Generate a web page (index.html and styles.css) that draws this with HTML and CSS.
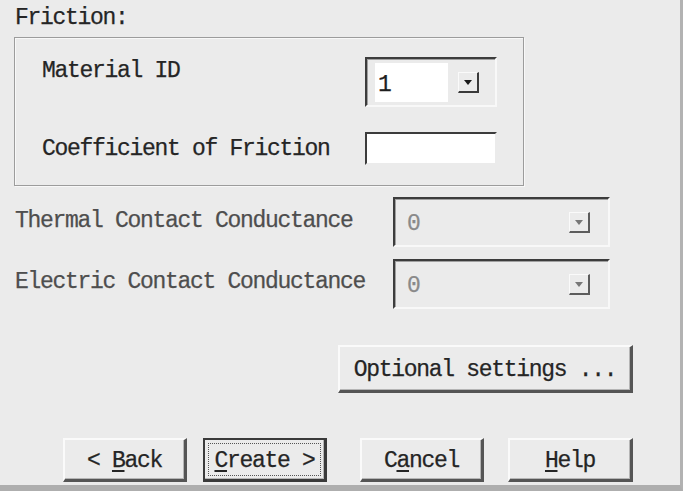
FILE: index.html
```html
<!DOCTYPE html>
<html>
<head>
<meta charset="utf-8">
<link rel="stylesheet" href="styles.css">
</head>
<body>
<div class="dialog">
  <div class="title">Friction:</div>
  <div class="group">
    <div class="label top">Material ID</div>
    <div class="combo">
      <div class="field">1</div>
      <div class="btnarea"><span class="dd"><span class="arrow"></span></span></div>
    </div>
    <div class="label">Coefficient of Friction</div>
    <div class="textbox"></div>
  </div>
  <div class="rows">
    <div class="label dis">Thermal Contact Conductance</div>
    <div class="combo disabled">
      <div class="field">0</div>
      <div class="btnarea"><span class="dd"><span class="arrow"></span></span></div>
    </div>
    <div class="label dis">Electric Contact Conductance</div>
    <div class="combo disabled">
      <div class="field">0</div>
      <div class="btnarea"><span class="dd"><span class="arrow"></span></span></div>
    </div>
  </div>
  <div class="optrow">
    <button class="btn opt"><span>Optional settings ...</span></button>
  </div>
  <div class="buttons">
    <button class="btn"><span>&lt; <u>B</u>ack</span></button>
    <button class="btn default"><span class="focus"><span><u>C</u>reate &gt;</span></span></button>
    <button class="btn cancel"><span>C<u>a</u>ncel</span></button>
    <button class="btn help"><span><u>H</u>elp</span></button>
  </div>
</div>
</body>
</html>
```

FILE: styles.css
```css
html, body {
  margin: 0;
  padding: 0;
  background: #ebebeb;
}
body {
  width: 683px;
  height: 491px;
  overflow: hidden;
  font-family: "Liberation Mono", "DejaVu Sans Mono", monospace;
  font-size: 23px;
  letter-spacing: -1.3px;
  color: #252525;
  -webkit-text-stroke: 0.25px currentColor;
}
.dialog {
  box-sizing: border-box;
  width: 683px;
  height: 491px;
  border-right: 3px solid #b2b2b2;
  border-bottom: 6px solid #aeaeae;
  display: flex;
  flex-direction: column;
}
.title {
  margin: 6px 0 0 15px;
  line-height: 24px;
  height: 24px;
}
.label {
  line-height: 26px;
  white-space: nowrap;
  align-self: center;
}
.label.top {
  align-self: start;
  margin-top: 1px;
}
.label.dis {
  color: #4e4e4e;
}
.group {
  box-sizing: border-box;
  margin: 7px 0 0 14px;
  width: 510px;
  height: 149px;
  border: 1px solid #9c9c9c;
  box-shadow: inset 1px 1px 0 #f8f8f8, 1px 1px 0 #f8f8f8;
  padding: 19px 0 0 27px;
  display: grid;
  grid-template-columns: 323px 132px;
  grid-template-rows: 50px 33px;
  row-gap: 25px;
}
.combo {
  box-sizing: border-box;
  height: 50px;
  border-top: 2px solid #3c3c3c;
  border-left: 2px solid #3c3c3c;
  border-right: 2px solid #f8f8f8;
  border-bottom: 2px solid #f8f8f8;
  box-shadow: inset 1px 1px 0 #a0a0a0;
  padding: 4px 4px 3px 8px;
  display: flex;
}
.field {
  width: 73px;
  background: #ffffff;
  line-height: 44px;
  padding-left: 3px;
  box-sizing: border-box;
  color: #1e1e1e;
}
.btnarea {
  flex: 1;
  display: flex;
  align-items: center;
  justify-content: flex-end;
  padding-right: 12px;
}
.dd {
  box-sizing: border-box;
  width: 21px;
  height: 21px;
  border-top: 1px solid #fafafa;
  border-left: 1px solid #fafafa;
  border-right: 2px solid #3a3a3a;
  border-bottom: 2px solid #3a3a3a;
  display: flex;
  align-items: center;
  justify-content: center;
}
.arrow {
  width: 0;
  height: 0;
  border-left: 4px solid transparent;
  border-right: 4px solid transparent;
  border-top: 5px solid #1a1a1a;
  margin-top: 1px;
}
.textbox {
  box-sizing: border-box;
  height: 33px;
  background: #ffffff;
  border-top: 2px solid #3c3c3c;
  border-left: 2px solid #3c3c3c;
  border-right: 2px solid #ebebeb;
  border-bottom: 2px solid #ebebeb;
  align-self: center;
}
.rows {
  margin: 11px 0 0 15px;
  display: grid;
  grid-template-columns: 378px 217px;
  grid-template-rows: 50px 48px;
  row-gap: 12px;
}
.rows .label {
  margin-top: -3px;
}
.combo.disabled {
  padding-left: 4px;
}
.combo.disabled .field {
  background: transparent;
  color: #8a8a8a;
  width: 120px;
  padding-left: 8px;
  line-height: 42px;
}
.combo.disabled .btnarea {
  padding-right: 14px;
}
.combo.disabled .dd {
  border-right-color: #5c5c5c;
  border-bottom-color: #5c5c5c;
}
.combo.disabled .arrow {
  border-top-color: #777;
}
.optrow {
  display: flex;
  justify-content: flex-end;
  margin: 38px 47px 0 0;
}
.btn {
  box-sizing: border-box;
  font-family: inherit;
  font-size: 23px;
  letter-spacing: -1.3px;
  color: #252525;
  background: #ebebeb;
  border-top: 2px solid #fafafa;
  border-left: 2px solid #fafafa;
  border-right: 3px solid #555555;
  border-bottom: 3px solid #555555;
  box-shadow: inset -1px -1px 0 #b5b5b5;
  padding: 2px 0 0 0;
  margin: 0;
  width: 124px;
  height: 44px;
  display: flex;
  align-items: center;
  justify-content: center;
  white-space: nowrap;
}
.btn span {
  white-space: pre;
}
.btn u {
  text-underline-offset: 3px;
}
.btn.opt {
  width: 295px;
  height: 48px;
}
.buttons {
  display: flex;
  margin: 45px 0 0 63px;
  gap: 16px;
}
.btn.default {
  border: 2px solid #3a3a3a;
  border-right-width: 3px;
  border-bottom-width: 3px;
  padding: 3px;
}
.btn .focus {
  box-sizing: border-box;
  width: 100%;
  height: 100%;
  border: 1px dotted #555;
  display: flex;
  align-items: center;
  justify-content: center;
  padding-top: 2px;
}
.btn.cancel {
  margin-left: 17px;
}
.btn.help {
  margin-left: 8px;
  width: 125px;
}
```
